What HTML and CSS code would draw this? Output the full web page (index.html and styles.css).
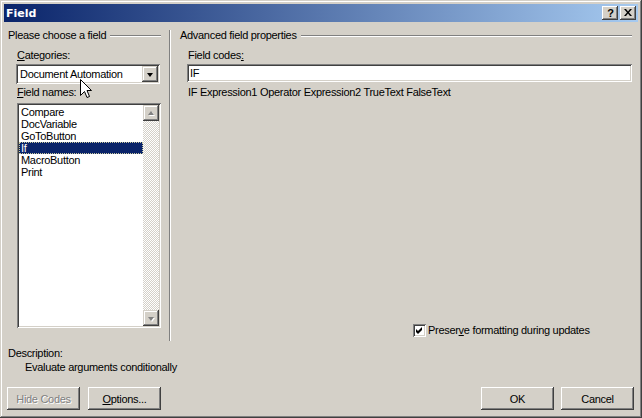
FILE: index.html
```html
<!DOCTYPE html>
<html>
<head>
<meta charset="utf-8">
<title>Field</title>
<link rel="stylesheet" href="styles.css">
</head>
<body>
<div class="window">
  <div class="titlebar">
    <span class="title">Field</span>
    <div class="tb-btn help">?</div>
    <div class="tb-btn close">
      <svg width="8" height="7" viewBox="0 0 8 7"><path d="M0 0h2l2 2.5L6 0h2L5 3.5 8 7H6L4 4.5 2 7H0l3-3.5z" fill="#000"/></svg>
    </div>
  </div>
  <div class="client">
    <div class="main">
      <section class="left">
        <div class="group-head"><span>Please choose a field</span><i class="etch"></i></div>
        <div class="fields">
          <div class="label first"><u>C</u>ategories:</div>
          <div class="combo">
            <span class="combo-text">Document Automation</span>
            <div class="drop-btn"><i class="tri down"></i></div>
          </div>
          <div class="label names"><u>F</u>ield names:</div>
          <div class="listbox">
            <ul class="items">
              <li>Compare</li>
              <li>DocVariable</li>
              <li>GoToButton</li>
              <li class="sel">If</li>
              <li>MacroButton</li>
              <li>Print</li>
            </ul>
            <div class="scrollbar">
              <div class="sb-btn"><i class="tri up dis"></i></div>
              <div class="sb-track"></div>
              <div class="sb-btn"><i class="tri down dis"></i></div>
            </div>
          </div>
        </div>
      </section>
      <div class="vsep"></div>
      <section class="right">
        <div class="group-head"><span>Advanced field properties</span><i class="etch"></i></div>
        <div class="fields rfields">
          <div class="label first">Field codes<u>:</u></div>
          <div class="textbox">IF</div>
          <div class="syntax">IF Expression1 Operator Expression2 TrueText FalseText</div>
          <label class="check-row">
            <span class="checkbox"><svg width="9" height="9" viewBox="0 0 9 9"><polygon points="1,3 3,5 7,1 7,4 3,8 1,6" fill="#000"/></svg></span>
            <span>Preser<u>v</u>e formatting during updates</span>
          </label>
        </div>
      </section>
    </div>
    <div class="desc">
      <div>Description:</div>
      <div class="desc-text">Evaluate arguments conditionally</div>
    </div>
    <div class="buttons">
      <div class="btn disabled">Hide Codes</div>
      <div class="btn"><u>O</u>ptions...</div>
      <div class="spacer"></div>
      <div class="btn">OK</div>
      <div class="btn">Cancel</div>
    </div>
  </div>
  <svg class="cursor" width="13" height="20" viewBox="0 0 13 20"><polygon points="0.5,0.5 0.5,16.5 4.5,12.5 7,18.5 9.5,17.5 7,11.5 11.5,11.5" fill="#fff" stroke="#000" stroke-width="1"/></svg>
</div>
</body>
</html>
```
FILE: styles.css
```css
* { box-sizing: border-box; }
html, body { margin: 0; padding: 0; }
body {
  width: 642px;
  height: 418px;
  overflow: hidden;
  font: 11px "Liberation Sans", Arial, sans-serif;
  letter-spacing: -0.3px;
  color: #000;
  background: #d4d0c8;
}
u { text-decoration: underline; text-underline-offset: 1px; }

.window {
  position: relative;
  width: 642px;
  height: 418px;
  padding: 4px;
  background: #d4d0c8;
  box-shadow: inset -1px -1px #404040, inset 1px 1px #d4d0c8,
              inset -2px -2px #808080, inset 2px 2px #fff;
  display: flex;
  flex-direction: column;
}

.titlebar {
  flex: none;
  height: 18px;
  display: flex;
  align-items: center;
  padding: 0 2px;
  background: linear-gradient(to right, #0a246a, #a6caf0);
}
.title {
  flex: 1;
  color: #fff;
  font-weight: bold;
  font-family: "DejaVu Sans", "Liberation Sans", sans-serif;
  font-size: 11px;
  letter-spacing: 0;
}
.tb-btn {
  width: 16px;
  height: 14px;
  background: #d4d0c8;
  box-shadow: inset -1px -1px #404040, inset 1px 1px #fff,
              inset -2px -2px #808080, inset 2px 2px #d4d0c8;
  display: flex;
  align-items: center;
  justify-content: center;
  font-weight: bold;
  font-size: 11px;
  line-height: 14px;
  letter-spacing: 0;
}
.tb-btn.help { padding-left: 1px; }
.tb-btn.close { margin-left: 2px; padding-bottom: 1px; }

.client {
  flex: 1;
  display: flex;
  flex-direction: column;
}
.main {
  flex: none;
  height: 320px;
  padding-top: 7px;
  display: flex;
}
.left {
  width: 165px;
  padding-left: 4px;
  padding-right: 8px;
  display: flex;
  flex-direction: column;
}
.group-head {
  display: flex;
  align-items: center;
  height: 13px;
  line-height: 13px;
  white-space: nowrap;
}
.etch {
  flex: 1;
  height: 2px;
  margin-left: 4px;
  border-top: 1px solid #808080;
  border-bottom: 1px solid #fff;
}
.fields {
  padding-left: 9px;
  display: flex;
  flex-direction: column;
}
.label { line-height: 13px; white-space: nowrap; }
.label.first { margin-top: 7px; }
.label.names { margin-top: 2px; }

.combo, .listbox, .textbox, .checkbox {
  background: #fff;
  box-shadow: inset 1px 1px #808080, inset -1px -1px #fff,
              inset 2px 2px #404040, inset -2px -2px #d4d0c8;
}
.combo {
  margin-top: 2px;
  margin-left: -1px;
  width: 144px;
  height: 20px;
  padding: 2px;
  display: flex;
  align-items: center;
}
.combo-text { flex: 1; padding-left: 2px; }
.drop-btn, .sb-btn {
  width: 16px;
  height: 16px;
  background: #d4d0c8;
  box-shadow: inset -1px -1px #404040, inset 1px 1px #d4d0c8,
              inset -2px -2px #808080, inset 2px 2px #fff;
  display: flex;
  align-items: center;
  justify-content: center;
}
.tri {
  width: 0;
  height: 0;
  border-left: 3.5px solid transparent;
  border-right: 3.5px solid transparent;
}
.tri.down { border-top: 4px solid #000; margin-top: 1px; }
.tri.up { border-bottom: 4px solid #000; margin-bottom: 1px; }
.tri.down.dis { border-top-color: #808080; filter: drop-shadow(1px 1px 0 #fff); }
.tri.up.dis { border-bottom-color: #808080; filter: drop-shadow(1px 1px 0 #fff); }

.listbox {
  margin-top: 4px;
  width: 144px;
  height: 225px;
  padding: 2px;
  display: flex;
}
.items {
  flex: 1;
  list-style: none;
  margin: 0;
  padding: 1px 0 0 0;
}
.items li {
  height: 12px;
  line-height: 12px;
  padding-left: 2px;
}
.items li.sel {
  background: #0a246a;
  color: #fff;
  outline: 1px dotted #c8c8a0;
  outline-offset: -1px;
}
.scrollbar {
  width: 16px;
  display: flex;
  flex-direction: column;
}
.sb-track {
  flex: 1;
  background-color: #fff;
  background-image: conic-gradient(#d4d0c8 25%, #fff 0 50%, #d4d0c8 0 75%, #fff 0);
  background-size: 2px 2px;
}

.vsep {
  width: 2px;
  margin: 1px 0;
  border-left: 1px solid #808080;
  border-right: 1px solid #fff;
}
.right {
  flex: 1;
  padding-left: 9px;
  padding-right: 6px;
  display: flex;
  flex-direction: column;
}
.rfields { padding-left: 8px; flex: 1; }
.textbox {
  margin-top: 2px;
  margin-left: -1px;
  height: 18px;
  padding: 2px 3px;
  line-height: 14px;
}
.syntax { margin-top: 4px; line-height: 13px; white-space: nowrap; }
.check-row {
  margin-top: auto;
  margin-bottom: 5px;
  margin-left: 225px;
  display: flex;
  align-items: center;
  height: 13px;
  line-height: 13px;
  white-space: nowrap;
}
.checkbox {
  width: 13px;
  height: 13px;
  margin-right: 2px;
  padding: 2px;
  display: flex;
}

.desc {
  margin-top: 5px;
  padding-left: 4px;
  line-height: 13px;
}
.desc-text { padding-left: 17px; margin-top: 1px; }

.buttons {
  margin-top: 13px;
  height: 23px;
  padding: 0 4px 0 3px;
  display: flex;
  gap: 8px;
}
.spacer { flex: 1; }
.btn {
  width: 73px;
  height: 23px;
  background: #d4d0c8;
  box-shadow: inset -1px -1px #404040, inset 1px 1px #fff,
              inset -2px -2px #808080, inset 2px 2px #d4d0c8;
  display: flex;
  align-items: center;
  justify-content: center;
}
.btn + .btn:last-child { margin-left: -1px; }
.btn.disabled {
  color: #808080;
  text-shadow: 1px 1px 0 #fff;
}
.cursor {
  position: absolute;
  left: 80px;
  top: 79px;
}
```
